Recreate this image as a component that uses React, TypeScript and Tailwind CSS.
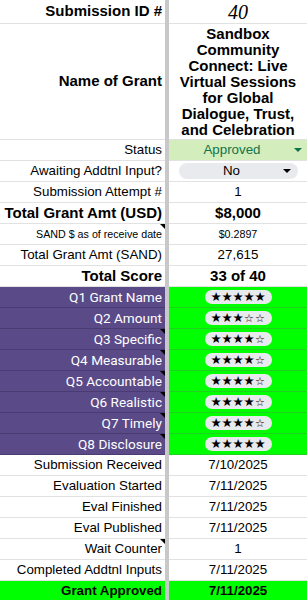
import React from "react";

type RowProps = {
  h?: string;
  left: React.ReactNode;
  right: React.ReactNode;
  lc?: string;
  rc?: string;
  tri?: boolean;
};

function Row({ h = "h-[21px]", left, right, lc = "border-[#e2e2e2] bg-white text-black", rc = "border-[#e2e2e2] bg-white text-black", tri = false }: RowProps) {
  return (
    <div className={`flex ${h} shrink-0`}>
      <div className={`relative w-[165px] shrink-0 flex items-center justify-end pr-[3px] border-b overflow-hidden whitespace-nowrap ${lc}`}>
        {left}
        {tri && (
          <span className="absolute top-0 right-0 w-0 h-0 border-l-[5px] border-l-transparent border-t-[5px] border-t-black" />
        )}
      </div>
      <div className="w-[4px] shrink-0 bg-[#c8c8c8]" />
      <div className={`flex-1 min-w-0 flex items-center justify-center border-b ${rc}`}>{right}</div>
    </div>
  );
}

function Stars({ n }: { n: number }) {
  const s = [0, 1, 2, 3, 4];
  return (
    <div className="flex items-center justify-center h-[14px] w-[67px] rounded-full bg-[#e8eaed]">
      {s.map((i) => (
        <span
          key={i}
          className={`w-[11px] text-center leading-none text-black font-['DejaVu_Sans',sans-serif] ${i < n ? "text-[12.5px]" : "text-[11px]"}`}
        >
          {i < n ? "★" : "☆"}
        </span>
      ))}
    </div>
  );
}

const purpleL = "border-[#4a3c73] bg-[#5a4a88] text-white font-['Roboto',sans-serif] text-[13.6px]";
const greenR = "border-[#1fd21f] bg-[#00ff00] text-black";

export default function App() {
  const qs: [string, number, boolean][] = [
    ["Q1 Grant Name", 5, false],
    ["Q2 Amount", 3, false],
    ["Q3 Specific", 4, true],
    ["Q4 Measurable", 4, true],
    ["Q5 Accountable", 4, true],
    ["Q6 Realistic", 4, true],
    ["Q7 Timely", 4, true],
    ["Q8 Disclosure", 5, true],
  ];
  const dates: [string, string, boolean][] = [
    ["Submission Received", "7/10/2025", false],
    ["Evaluation Started", "7/11/2025", false],
    ["Eval Finished", "7/11/2025", false],
    ["Eval Published", "7/11/2025", false],
    ["Wait Counter", "1", true],
    ["Completed Addtnl Inputs", "7/11/2025", false],
  ];
  return (
    <div className="w-[307px] h-[600px] overflow-hidden bg-white flex flex-col font-['Liberation_Sans',Arial,sans-serif] text-[13.33px] text-black">
      <Row
        h="h-[24px]"
        left={<span className="font-bold text-[15px]">Submission ID #</span>}
        right={<span className="italic text-[20px] font-['Liberation_Serif',serif] leading-none">40</span>}
      />
      <Row
        h="h-[116px]"
        left={<span className="font-bold text-[15px]">Name of Grant</span>}
        right={
          <div className="px-[3px] text-center font-bold text-[15px] leading-[16px]">
            Sandbox Community Connect: Live Virtual Sessions for Global Dialogue, Trust, and Celebration
          </div>
        }
      />
      <Row
        left={<span>Status</span>}
        rc="border-[#e2e2e2] bg-[#d4edbc] text-[#11734b]"
        right={
          <div className="flex w-full items-center">
            <span className="flex-1 text-center pl-[1px]">Approved</span>
            <span className="mr-[5px] w-0 h-0 border-l-[4px] border-r-[4px] border-t-[4px] border-l-transparent border-r-transparent border-t-[#11734b]" />
          </div>
        }
      />
      <Row
        left={<span>Awaiting Addtnl Input?</span>}
        right={
          <div className="flex items-center w-[119px] h-[16px] rounded-full bg-[#e8eaed]">
            <span className="flex-1 text-center pl-[2px]">No</span>
            <span className="mr-[7px] w-0 h-0 border-l-[4px] border-r-[4px] border-t-[4px] border-l-transparent border-r-transparent border-t-black" />
          </div>
        }
      />
      <Row left={<span>Submission Attempt #</span>} right={<span>1</span>} />
      <Row
        left={<span className="font-bold text-[15px]">Total Grant Amt (USD)</span>}
        right={<span className="font-bold text-[15px]">$8,000</span>}
      />
      <Row
        tri
        left={<span className="text-[10.7px]">SAND $ as of receive date</span>}
        right={<span className="text-[10.7px]">$0.2897</span>}
      />
      <Row left={<span>Total Grant Amt (SAND)</span>} right={<span>27,615</span>} />
      <Row
        left={<span className="font-bold text-[15px]">Total Score</span>}
        right={<span className="font-bold text-[15px]">33 of 40</span>}
      />
      {qs.map(([q, n, t]) => (
        <Row key={q} tri={t} lc={purpleL} rc={greenR} left={<span>{q}</span>} right={<Stars n={n} />} />
      ))}
      {dates.map(([l, r, t]) => (
        <Row key={l} tri={t} left={<span>{l}</span>} right={<span>{r}</span>} />
      ))}
      <Row
        lc="border-[#1fd21f] bg-[#00ff00] text-black"
        rc={greenR}
        left={<span className="font-bold">Grant Approved</span>}
        right={<span className="font-bold">7/11/2025</span>}
      />
    </div>
  );
}
